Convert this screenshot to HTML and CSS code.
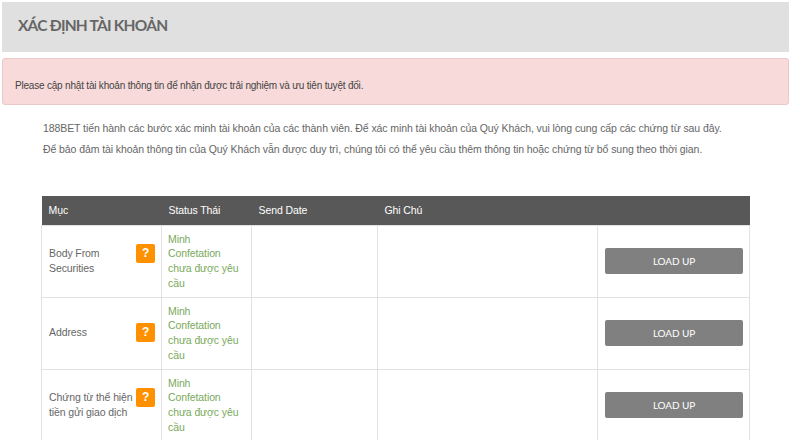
FILE: index.html
```html
<!DOCTYPE html>
<html>
<head>
	<meta charset="UTF-8">
	<title>Xác định tài khoản</title>
	<link rel="stylesheet" href="styles.css">
</head>
<body>
	<div class="page">
		<h1 class="page-title">XÁC ĐỊNH TÀI KHOẢN</h1>
		<div class="alert">Please cập nhật tài khoản thông tin để nhận được trải nghiệm và ưu tiên tuyệt đối.</div>
		<div class="intro">
			<p>188BET tiến hành các bước xác minh tài khoản của các thành viên. Để xác minh tài khoản của Quý Khách, vui lòng cung cấp các chứng từ sau đây.</p>
			<p>Để bảo đảm tài khoản thông tin của Quý Khách vẫn được duy trì, chúng tôi có thể yêu cầu thêm thông tin hoặc chứng từ bổ sung theo thời gian.</p>
		</div>
		<table class="doc-table">
			<colgroup>
				<col class="col-item">
				<col class="col-status">
				<col class="col-date">
				<col class="col-note">
				<col class="col-action">
			</colgroup>
			<thead>
				<tr>
					<th>Mục</th>
					<th>Status Thái</th>
					<th>Send Date</th>
					<th>Ghi Chú</th>
					<th></th>
				</tr>
			</thead>
			<tbody>
				<tr>
					<td>
						<div class="item">
							<span class="item-name">Body From Securities</span>
							<span class="help">?</span>
						</div>
					</td>
					<td class="status">Minh Confetation chưa được yêu cầu</td>
					<td></td>
					<td></td>
					<td class="action"><button type="button" class="load-btn">LOAD UP</button></td>
				</tr>
				<tr>
					<td>
						<div class="item">
							<span class="item-name">Address</span>
							<span class="help">?</span>
						</div>
					</td>
					<td class="status">Minh Confetation chưa được yêu cầu</td>
					<td></td>
					<td></td>
					<td class="action"><button type="button" class="load-btn">LOAD UP</button></td>
				</tr>
				<tr>
					<td>
						<div class="item">
							<span class="item-name">Chứng từ thể hiện tiền gửi giao dịch</span>
							<span class="help">?</span>
						</div>
					</td>
					<td class="status">Minh Confetation chưa được yêu cầu</td>
					<td></td>
					<td></td>
					<td class="action"><button type="button" class="load-btn">LOAD UP</button></td>
				</tr>
			</tbody>
		</table>
	</div>
</body>
</html>
```

FILE: styles.css
```css
html, body {
	margin: 0;
	padding: 0;
	height: 440px;
	overflow: hidden;
	background-color: #ffffff;
	font-family: "Liberation Sans", Arial, sans-serif;
}

.page {
	width: 787px;
	padding: 2px 0 0 2px;
}

.page-title {
	margin: 0;
	height: 50px;
	padding-left: 16px;
	line-height: 46px;
	background-color: #e0e0e0;
	color: #666666;
	font-family: Lato, sans-serif;
	font-size: 15.5px;
	font-weight: 700;
	letter-spacing: -0.78px;
}

.alert {
	box-sizing: border-box;
	height: 47px;
	margin-top: 6px;
	padding-left: 12px;
	line-height: 53px;
	background-color: #f8dada;
	border: 1px solid #e8c8c8;
	border-radius: 3px;
	color: #444444;
	font-size: 10px;
	letter-spacing: -0.2px;
}

.intro {
	margin-top: 13px;
	padding-left: 41px;
	color: #666666;
	font-size: 10.5px;
	letter-spacing: -0.085px;
	line-height: 21px;
}

.intro p {
	margin: 0;
}

.doc-table {
	width: 708px;
	margin: 36px 0 0 39px;
	border-collapse: collapse;
	table-layout: fixed;
	font-size: 10.5px;
	letter-spacing: -0.1px;
}

.col-item { width: 120px; }
.col-status { width: 90px; }
.col-date { width: 126px; }
.col-note { width: 220px; }
.col-action { width: 152px; }

.doc-table th {
	height: 29px;
	padding: 0 7px 1px;
	box-sizing: border-box;
	background-color: #585858;
	color: #ffffff;
	font-weight: 400;
	text-align: left;
}

.doc-table td {
	height: 72px;
	box-sizing: border-box;
	padding: 0 7px;
	border: 1px solid #e2e2e2;
	color: #666666;
	line-height: 14.6px;
}

.item {
	display: flex;
	align-items: flex-start;
	justify-content: space-between;
	margin-top: -1px;
}

.item-name {
	width: 86px;
}

/* sits level with the first line of the name */
.help {
	flex: none;
	width: 19px;
	height: 19px;
	margin: -2px -1px -3px 0;
	background-color: #ff9100;
	border-radius: 2px;
	color: #ffffff;
	font-size: 12px;
	font-weight: 700;
	line-height: 19px;
	text-align: center;
}

.doc-table td.status {
	padding-left: 6px;
	color: #7aa95c;
}

.load-btn {
	display: block;
	box-sizing: border-box;
	width: 138px;
	height: 26px;
	margin-top: -1px;
	padding: 0;
	background-color: #808080;
	border: none;
	border-radius: 2px;
	color: #ffffff;
	font-family: Lato, sans-serif;
	font-size: 10px;
	letter-spacing: -0.1px;
}
```
